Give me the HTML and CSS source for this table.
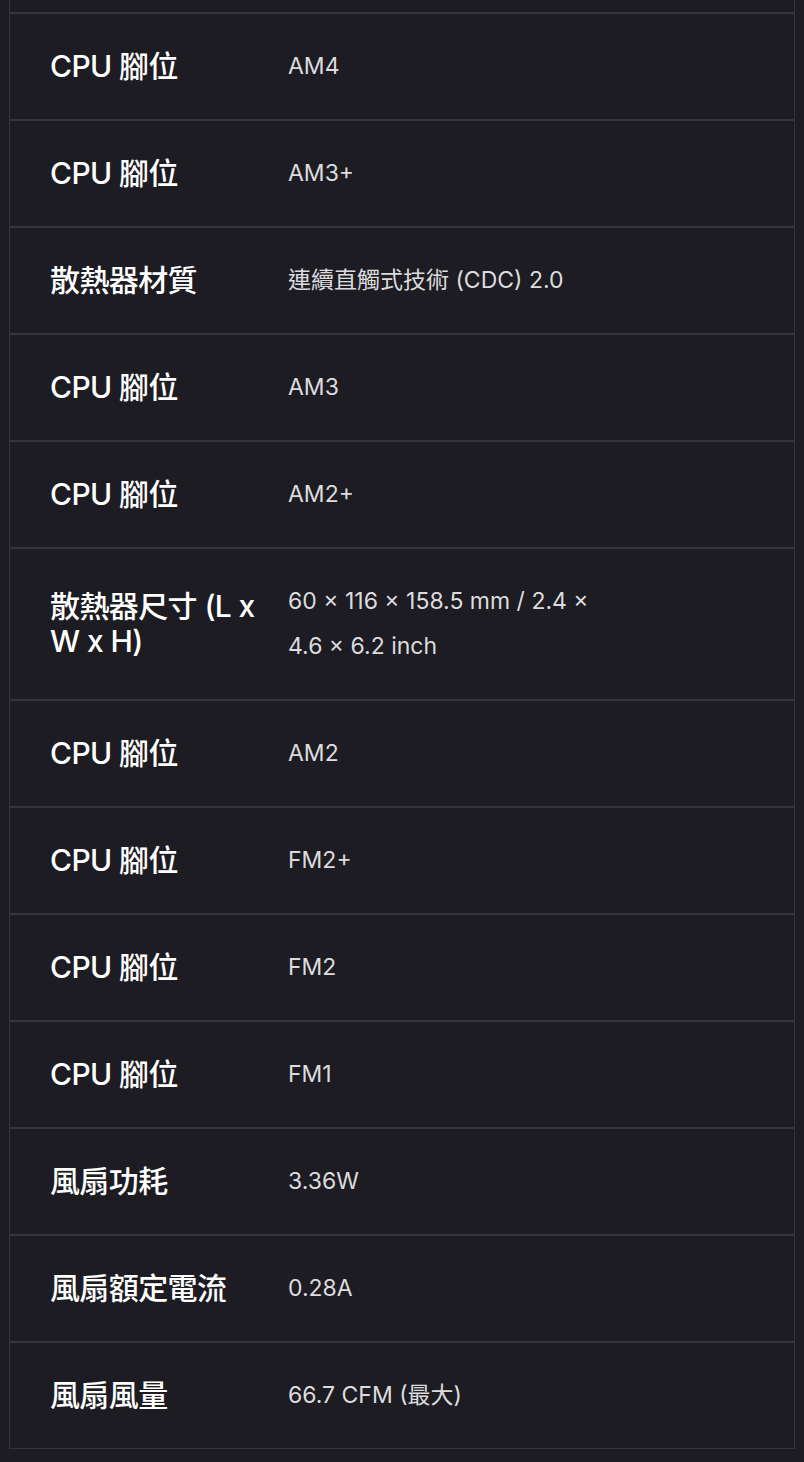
FILE: index.html
```html
<!DOCTYPE html>
<html lang="zh-Hant">
<head>
<meta charset="utf-8">
<title>規格</title>
<link rel="stylesheet" href="styles.css">
</head>
<body>
<div class="specs">
  <div class="tail"></div>
  <div class="row"><div class="label">CPU 腳位</div><div class="value">AM4</div></div>
  <div class="row"><div class="label">CPU 腳位</div><div class="value">AM3+</div></div>
  <div class="row"><div class="label">散熱器材質</div><div class="value">連續直觸式技術 (CDC) 2.0</div></div>
  <div class="row"><div class="label">CPU 腳位</div><div class="value">AM3</div></div>
  <div class="row"><div class="label">CPU 腳位</div><div class="value">AM2+</div></div>
  <div class="row"><div class="label">散熱器尺寸 (L x W x H)</div><div class="value">60 × 116 × 158.5 mm / 2.4 × 4.6 × 6.2 inch</div></div>
  <div class="row"><div class="label">CPU 腳位</div><div class="value">AM2</div></div>
  <div class="row"><div class="label">CPU 腳位</div><div class="value">FM2+</div></div>
  <div class="row"><div class="label">CPU 腳位</div><div class="value">FM2</div></div>
  <div class="row"><div class="label">CPU 腳位</div><div class="value">FM1</div></div>
  <div class="row"><div class="label">風扇功耗</div><div class="value">3.36W</div></div>
  <div class="row"><div class="label">風扇額定電流</div><div class="value">0.28A</div></div>
  <div class="row"><div class="label">風扇風量</div><div class="value">66.7 CFM (最大)</div></div>
</div>
</body>
</html>
```

FILE: styles.css
```css
html, body {
  background: #1c1c22;
}
body {
  margin: 0 9px 12px 9px;
  font-family: Inter, "Noto Sans CJK TC", sans-serif;
}
.specs {
  border: 1px solid #34343e;
  border-top: none;
}
.tail {
  height: 12px;
  border-bottom: 1px solid #34343e;
}
.row {
  display: flex;
  align-items: center;
  gap: 18px;
  padding: 30px 40px;
  border-top: 1px solid #34343e;
  border-bottom: 1px solid #34343e;
}
.row:last-child {
  border-bottom: none;
}
.label {
  width: 220px;
  flex: none;
  color: #ffffff;
  font-size: 30px;
  font-weight: 500;
  line-height: 35px;
  letter-spacing: -0.02em;
}
.value {
  width: 320px;
  flex: none;
  color: #dcdcdf;
  font-size: 23px;
  font-weight: 400;
  line-height: 45px;
}
```
